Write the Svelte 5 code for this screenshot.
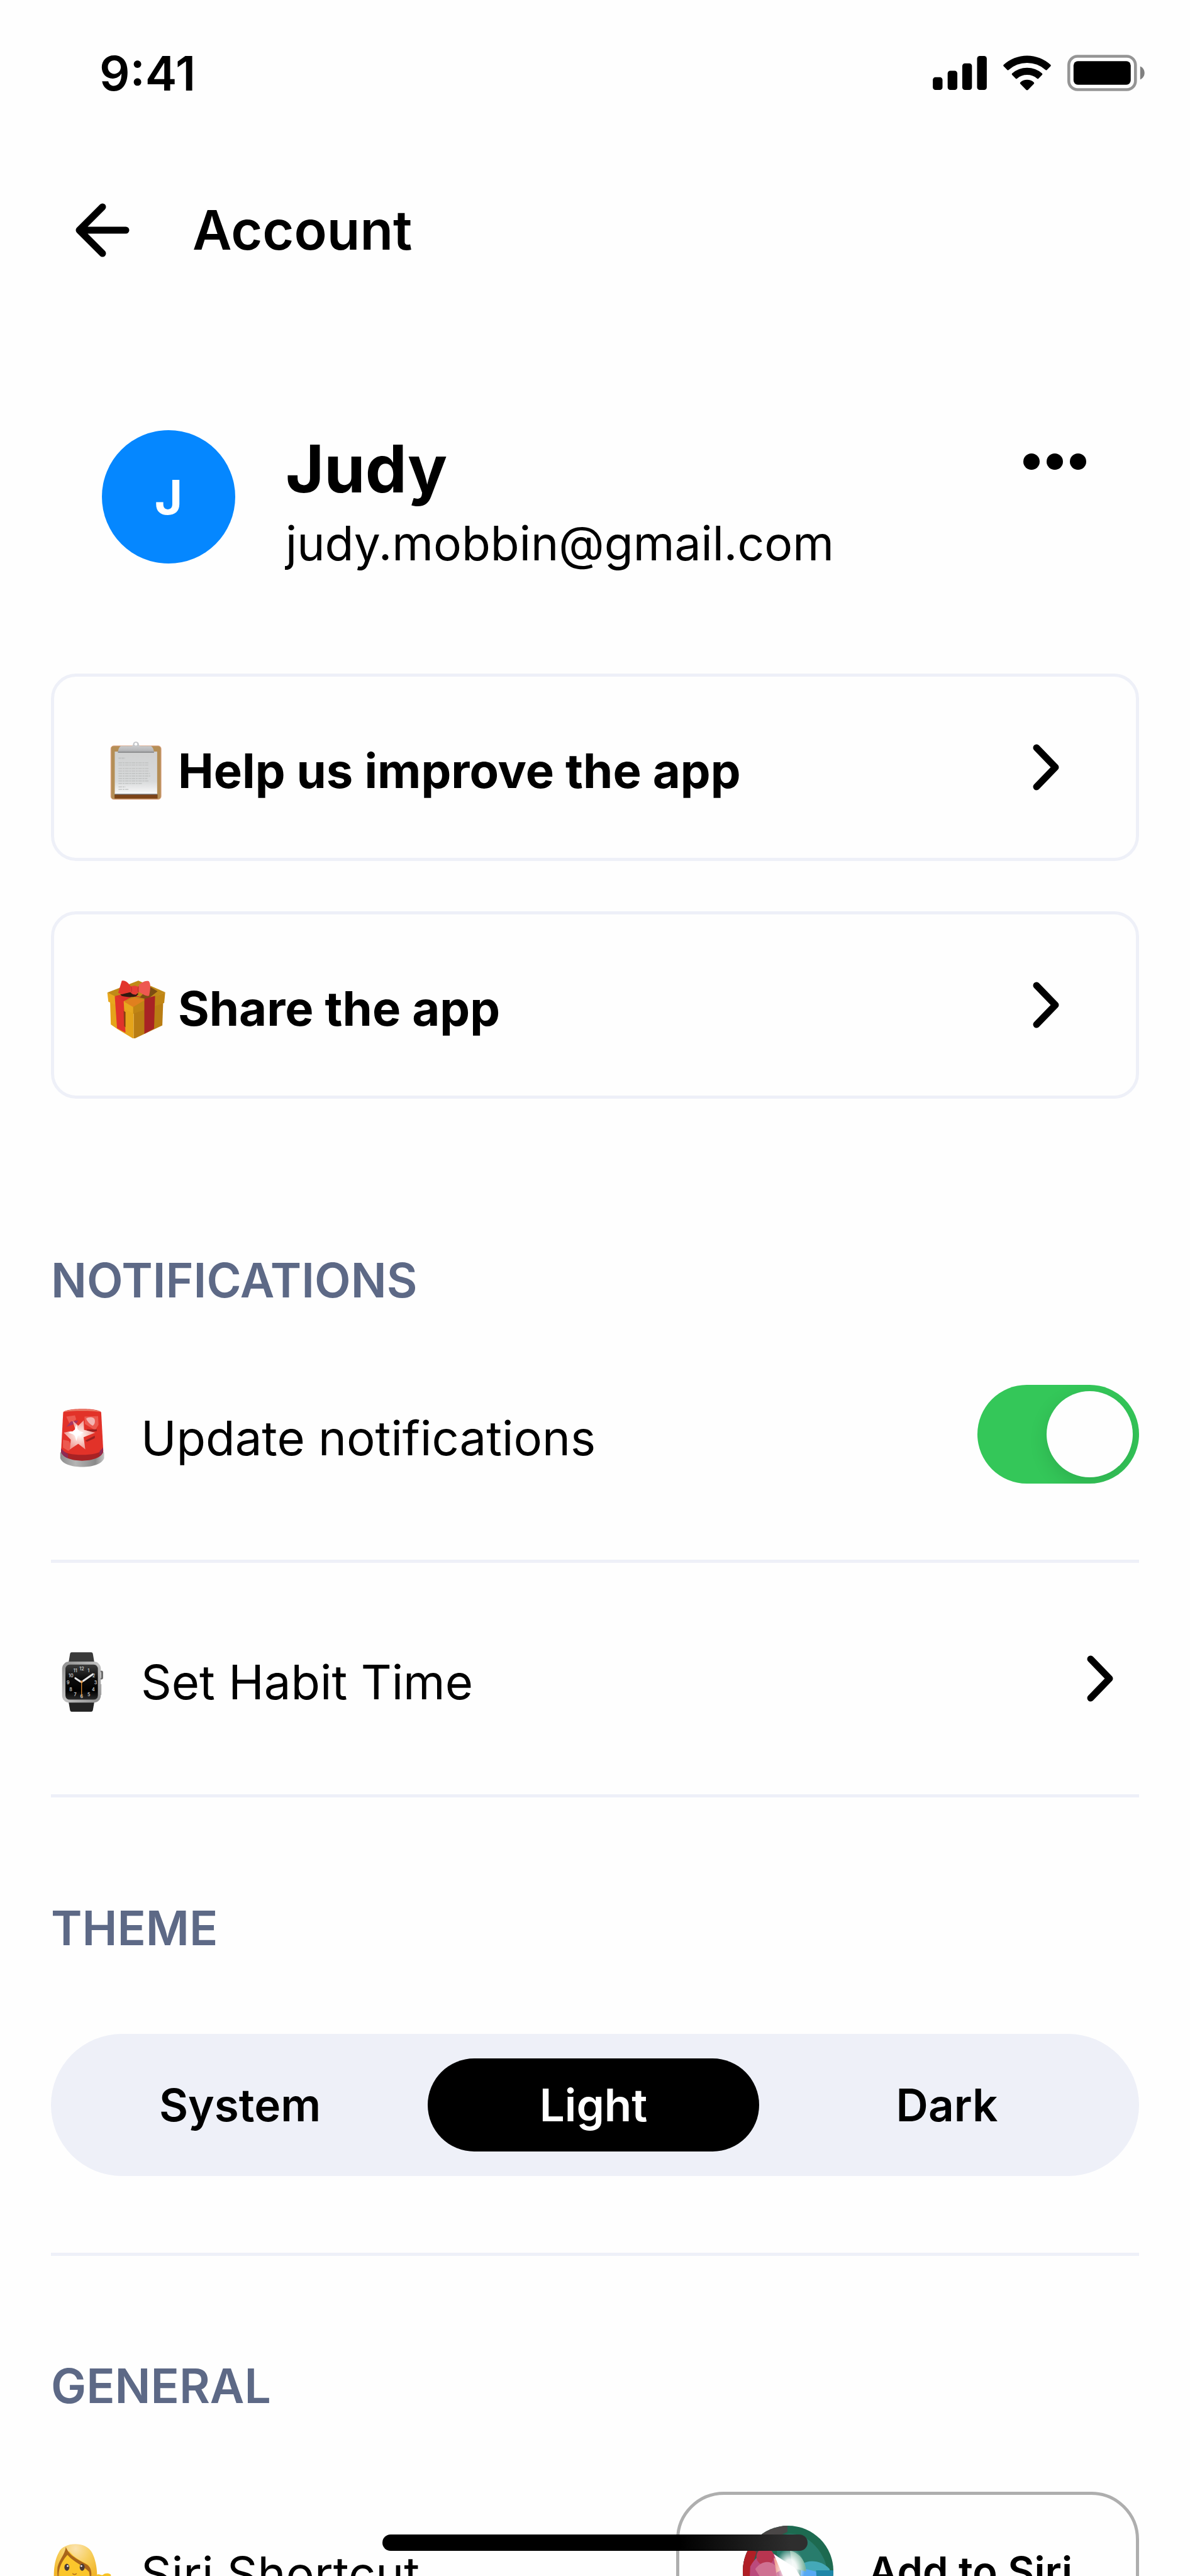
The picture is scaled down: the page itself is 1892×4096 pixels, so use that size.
<script lang="ts">
  type Theme = 'System' | 'Light' | 'Dark';

  const themes: Theme[] = ['System', 'Light', 'Dark'];

  let theme = $state<Theme>('Light');
  let updates = $state(true);
</script>

{#snippet chevron()}
  <svg class="chevron" viewBox="0 0 42 74" aria-hidden="true">
    <path d="M6 6 36 37 6 68" />
  </svg>
{/snippet}

{#snippet clipboard()}
  <svg class="emoji" viewBox="59 73 292 292" aria-hidden="true">
    <defs>
      <linearGradient id="paper" x1="0" y1="0" x2="0" y2="1">
        <stop offset="0" stop-color="#d0d1d1" />
        <stop offset="0.7" stop-color="#d8dadb" />
        <stop offset="1" stop-color="#fafafa" />
      </linearGradient>
      <linearGradient id="clip" x1="0" y1="0" x2="0" y2="1">
        <stop offset="0" stop-color="#c9cacc" />
        <stop offset="0.7" stop-color="#b4b5b7" />
        <stop offset="1" stop-color="#7f8082" />
      </linearGradient>
    </defs>
    <rect x="84" y="100" width="243" height="259" rx="14" fill="#b58e56" stroke="#e3a88c" stroke-width="3" />
    <rect x="102" y="335" width="208" height="20" fill="#7c4318" />
    <rect x="103" y="128" width="205" height="206" fill="url(#paper)" />
    <path d="M103 334h205" stroke="#6f7680" stroke-width="4" />
    <path d="M121 160h32" stroke="#bfc1c1" stroke-width="6" stroke-dasharray="12 3" />
    <path
      d="M121 182h144M121 193h144M121 210h146M121 222h148M121 234h152M121 246h154M121 258h140M121 270h148M121 282h116M121 299h34M121 311h48"
      stroke="#c3c5c5"
      stroke-width="5"
      stroke-dasharray="17 3 9 3"
    />
    <path d="M181 106c8-4 10-10 11-17 3-12 24-12 27 0 1 7 3 13 12 17z" fill="#c4c6c9" />
    <circle cx="205" cy="92" r="7" fill="#fefefe" />
    <path d="M132 101h146c9 5 14 17 15 33H118c1-16 6-28 14-33z" fill="url(#clip)" />
  </svg>
{/snippet}

{#snippet gift()}
  <svg class="emoji" viewBox="59 77 292 292" aria-hidden="true">
    <path d="M80 180 195 215V372L118 326 84 302z" fill="#e5a41a" />
    <path d="M195 215 338 170 333 307 195 372z" fill="#b97d13" />
    <path d="M67 148 217 90 347 146 192 219z" fill="#c08a17" />
    <path d="M67 148 192 206V248L72 192z" fill="#e8a81e" />
    <path d="M192 210 347 146 342 198 192 250z" fill="#c08514" />
    <path d="M222 172 275 120 310 142 262 180z" fill="#7c4d12" />
    <path d="M103 165 146 188 155 342 114 320z" fill="#e0332a" />
    <path d="M146 236 155 242V316L148 310z" fill="#8b3d12" />
    <path d="M246 178 298 164 293 322 246 348z" fill="#a82324" />
    <path d="M103 165 160 150 240 172 190 166 146 190z" fill="#dc3129" />
    <path d="M148 192 196 172 247 184 192 218z" fill="#e0801e" />
    <path d="M130 156c24-8 62-16 88-2l-12 12c-20 6-50 4-70-2z" fill="#301a10" />
    <path d="M137 91c16-5 30 9 42 24l4 30-46 11c-7-3-16-3-17-9z" fill="#e2342c" />
    <path d="M218 111c16-11 33-24 50-18 9 12 9 34 1 70-18 6-34-12-50-18z" fill="#ee5850" />
    <path d="M178 121c10-9 32-9 40 2 3 14 0 27-13 35-14 0-24-6-27-15z" fill="#e63e36" />
    <path d="M181 118c5 12 4 24 2 28M218 118c-4 12-3 20 0 30" fill="none" stroke="#b8292a" stroke-width="3" />
  </svg>
{/snippet}

{#snippet siren()}
  <svg class="emoji" viewBox="40 94 292 292" aria-hidden="true">
    <defs>
      <linearGradient id="base" x1="0" x2="1">
        <stop offset="0" stop-color="#8e8e8e" />
        <stop offset="0.35" stop-color="#b4b4b4" />
        <stop offset="0.8" stop-color="#8a8a8a" />
        <stop offset="1" stop-color="#c4c4c4" />
      </linearGradient>
      <radialGradient id="flare">
        <stop offset="0" stop-color="#fff" />
        <stop offset="0.35" stop-color="#fbdcd6" />
        <stop offset="1" stop-color="#f09a93" />
      </radialGradient>
    </defs>
    <path d="M79 312c22-20 190-20 212 0v26c-14 58-198 58-212 0z" fill="url(#base)" />
    <path d="M93 118c6-22 176-24 184 0l10 184c-14 62-192 62-204 0z" fill="#e23229" />
    <path d="M84 296c20 36 180 36 202 0l1 12c-14 58-192 58-204 0z" fill="#a82224" />
    <path d="M84 292c8 12 20 22 32 27v20c-16-6-30-16-33-31zM286 286c-3 8-10 14-16 18l-2 24c10-6 17-14 18-24z" fill="#8e2a55" />
    <path d="M96 116c14-17 164-17 178 0-40-8-138-8-178 0z" fill="#e98672" />
    <path d="M108 138l42-6 6 20-32 20zM92 250l28 6 20 30-22 18-26-16zM196 138l66-2 2 42-16 26-50-30z" fill="#ec5a50" />
    <path d="M204 148c12-10 38-10 42 6 2 14-2 22-10 28-16-8-26-20-32-34z" fill="#f4b5b3" />
    <path d="M206 200h50v8l-46 8zM200 254l46-24v12l-38 18z" fill="#9b2020" />
    <path d="M108 188l22-26 36-6-8 14z" fill="#a83560" />
    <path
      d="M157 216 138 156l28 26 26-26 2 46 54 14-56 22 8 58-34-26-40 26 4-46-34-34 34-8z"
      fill="url(#flare)"
    />
    <path d="m157 178 8 28 28 10-28 10-8 30-9-30-30-10 30-10z" fill="#fff" />
    <circle cx="157" cy="216" r="17" fill="#fff" />
  </svg>
{/snippet}

{#snippet watch()}
  <svg class="emoji" viewBox="40 74 292 292" aria-hidden="true">
    <defs>
      <linearGradient id="case" x1="0" y1="0" x2="1" y2="1">
        <stop offset="0" stop-color="#8e8e8e" />
        <stop offset="0.5" stop-color="#c2c2c2" />
        <stop offset="1" stop-color="#8a8a8a" />
      </linearGradient>
      <linearGradient id="face" x1="0" y1="0" x2="0" y2="1">
        <stop offset="0" stop-color="#3c3c3c" />
        <stop offset="0.4" stop-color="#0c0c0c" />
        <stop offset="0.75" stop-color="#000" />
        <stop offset="1" stop-color="#2c2c2c" />
      </linearGradient>
    </defs>
    <path d="M134 78h94c6 0 8 4 9 9l7 42H119l7-42c1-5 3-9 8-9z" fill="#3a3a3a" />
    <path d="M119 316h125l-7 40c-1 5-3 9-9 9h-94c-5 0-7-4-8-9z" fill="#222" />
    <rect x="268" y="167" width="18" height="42" rx="7" fill="#666" />
    <path d="M274 174v28" stroke="#eee" stroke-width="6" />
    <path d="M275 232v52" stroke="#aaa" stroke-width="6" />
    <rect x="88" y="123" width="187" height="198" rx="34" fill="url(#case)" />
    <rect x="104" y="137" width="157" height="170" rx="20" fill="url(#face)" />
    <g class="digits">
      <text x="183" y="165">12</text>
      <text x="216" y="173">1</text>
      <text x="241" y="198">2</text>
      <text x="250" y="232">3</text>
      <text x="239" y="266">4</text>
      <text x="217" y="289">5</text>
      <text x="182" y="298">6</text>
      <text x="151" y="289">7</text>
      <text x="130" y="266">8</text>
      <text x="117" y="232">9</text>
      <text x="131" y="200">10</text>
      <text x="152" y="173">11</text>
    </g>
    <path d="M152 203 176 219M190 216 236 184" stroke="#e8e8e8" stroke-width="9" stroke-linecap="round" />
    <path d="M182 216v78" stroke="#e08a2c" stroke-width="4" />
    <circle cx="182" cy="221" r="6" fill="#eaa55c" />
  </svg>
{/snippet}

{#snippet woman()}
  <svg class="emoji" viewBox="40 76 292 292" aria-hidden="true">
    <defs>
      <radialGradient id="hair" cx="0.5" cy="0.1" r="0.7">
        <stop offset="0" stop-color="#fbe3b0" />
        <stop offset="0.5" stop-color="#f7cf5e" />
        <stop offset="1" stop-color="#f2b62a" />
      </radialGradient>
    </defs>
    <path d="M48 300c0-70-4-130 24-180 22-52 132-56 160 0 28 54 26 110 26 180z" fill="url(#hair)" />
    <path d="M248 290c-4-30 0-56 12-64 12-2 20 8 26 2 8-8 26-10 36-2 8 18 0 60-20 80z" fill="#f7c325" />
    <path d="M78 180c6-28 24-50 44-66 24 32 62 50 94 66 10 60 0 120-66 126-62-6-80-60-72-126z" fill="#fbc62c" />
    <path
      d="M106 94c-4 34-32 62-40 96-4 32 2 70 12 92-18-56-2-110 36-150 30 36 70 46 104 82 8 32 2 58-8 76 26-50 26-90 0-110-40-24-84-38-104-86z"
      fill="#a9651a"
    />
    <ellipse cx="111" cy="192" rx="12" ry="17" fill="#4a3a36" />
    <ellipse cx="185" cy="192" rx="12" ry="17" fill="#4a3a36" />
    <circle cx="115" cy="186" r="4" fill="#fff" />
    <circle cx="181" cy="186" r="4" fill="#fff" />
    <path d="M138 222c6 6 14 6 20 0" fill="none" stroke="#b3701c" stroke-width="5" />
  </svg>
{/snippet}

{#snippet siriOrb()}
  <svg class="orb" viewBox="0 0 147 147" aria-hidden="true">
    <defs>
      <clipPath id="ball"><circle cx="73" cy="73" r="73" /></clipPath>
      <radialGradient id="glow">
        <stop offset="0" stop-color="#fff" />
        <stop offset="0.45" stop-color="#fff" stop-opacity="0.9" />
        <stop offset="1" stop-color="#fff" stop-opacity="0" />
      </radialGradient>
    </defs>
    <g clip-path="url(#ball)">
      <rect width="147" height="147" fill="#1d6a50" />
      <path d="M0 147V20L30 0h42v10C50 20 34 34 14 58z" fill="#4a4747" />
      <path d="M54 20C80 2 120 20 134 62l4 85H60z" fill="#287c6c" />
      <path d="M0 147V34l22 8-8 30v75z" fill="#b01f26" />
      <path d="M12 66c10-20 30-32 46-14l26 20-6 75H8z" fill="#bb4a7c" />
      <circle cx="36" cy="50" r="14" fill="#b83550" />
      <path d="M20 70c10-14 24-14 32-6l6 20-22 12z" fill="#cf7192" />
      <path d="M50 52c10 2 14 10 14 18l-10 6z" fill="#f0a597" />
      <path d="M96 62c10-8 32-6 44 8v50H96z" fill="#44a9b8" />
      <path d="M118 72h29v40h-26z" fill="#1f86a8" />
      <path d="M94 68l24 6 4 40H90z" fill="#56a9f4" />
      <path d="M76 40c16 4 26 18 26 34l-22-6z" fill="#7db5a0" />
      <ellipse cx="76" cy="70" rx="24" ry="34" fill="url(#glow)" />
      <path d="m50 46 34 22 14 22-32-6z" fill="#fff" />
    </g>
  </svg>
{/snippet}

<div class="screen">
  <div class="status-bar">
    <span class="time">9:41</span>
    <div class="indicators">
      <svg class="signal" viewBox="0 0 262 165" aria-hidden="true">
        <rect x="0" y="103" width="47" height="62" rx="13" />
        <rect x="72" y="72" width="47" height="93" rx="13" />
        <rect x="143" y="36" width="47" height="129" rx="13" />
        <rect x="215" y="0" width="47" height="165" rx="13" />
      </svg>
      <svg class="wifi" viewBox="0 0 236 171" aria-hidden="true">
        <path d="M4 46Q1 50 4 53L22 71Q25 74 28 71A134 134 0 0 1 208 71Q211 74 214 71L232 53Q235 50 232 46A168 168 0 0 0 4 46z" />
        <path d="M45 88Q42 92 45 95L63 113Q66 116 69 113A75 75 0 0 1 167 113Q170 116 173 113L191 95Q194 92 191 88A110 110 0 0 0 45 88z" />
        <path d="M85 131Q82 135 85 138L114 168Q118 171 122 168L151 138Q154 135 151 131A50 50 0 0 0 85 131z" />
      </svg>
      <svg class="battery" viewBox="0 0 376 176" aria-hidden="true">
        <rect x="7" y="7" width="324" height="162" rx="42" fill="none" stroke="#959595" stroke-width="14" />
        <rect x="30" y="31" width="278" height="114" rx="21" />
        <path d="M354 56C382 68 382 108 354 120z" fill="#808080" />
      </svg>
    </div>
  </div>

  <header>
    <button type="button" class="back" aria-label="Back">
      <svg viewBox="0 0 86 86" aria-hidden="true">
        <path d="M43 6 6 43 43 80M6 43H80" />
      </svg>
    </button>
    <h1>Account</h1>
  </header>

  <main>
    <section class="profile">
      <div class="avatar">J</div>
      <div class="identity">
        <h2>Judy</h2>
        <p>judy.mobbin@gmail.com</p>
      </div>
      <button type="button" class="more" aria-label="More options">
        <svg viewBox="0 0 100 28" aria-hidden="true">
          <circle cx="13" cy="14" r="13" />
          <circle cx="50" cy="14" r="13" />
          <circle cx="87" cy="14" r="13" />
        </svg>
      </button>
    </section>

    <div class="cards">
      <button type="button" class="card">
        <span class="label">{@render clipboard()}Help us improve the app</span>
        {@render chevron()}
      </button>
      <button type="button" class="card">
        <span class="label">{@render gift()}Share the app</span>
        {@render chevron()}
      </button>
    </div>

    <section class="notifications">
      <h3>NOTIFICATIONS</h3>
      <div class="row">
        <label class="label" for="updates">{@render siren()}Update notifications</label>
        <input id="updates" class="toggle" type="checkbox" role="switch" bind:checked={updates} />
      </div>
      <button type="button" class="row habit">
        <span class="label">{@render watch()}Set Habit Time</span>
        {@render chevron()}
      </button>
    </section>

    <section class="theme">
      <h3>THEME</h3>
      <div class="segments" role="radiogroup" aria-label="Theme">
        {#each themes as option}
          <label class:active={theme === option}>
            <input type="radio" name="theme" value={option} bind:group={theme} />
            {option}
          </label>
        {/each}
      </div>
    </section>

    <section class="general">
      <h3>GENERAL</h3>
      <div class="siri">
        <span class="label">{@render woman()}Siri Shortcut</span>
        <button type="button" class="add">{@render siriOrb()}Add to Siri</button>
      </div>
    </section>
  </main>

  <div class="home-indicator"></div>
</div>

<style>
  :global(body) {
    background: #fefefe;
  }

  .screen {
    position: relative;
    height: 100vh;
    overflow: hidden;
    background: #fefefe;
    color: #000;
    font-family: Inter, 'Liberation Sans', sans-serif;
    font-size: 76px;
    line-height: 90px;
  }

  h1,
  h2,
  h3,
  p {
    margin: 0;
  }

  button {
    appearance: none;
    margin: 0;
    padding: 0;
    border: none;
    background: transparent;
    color: inherit;
    font: inherit;
    text-align: left;
    cursor: pointer;
  }

  svg {
    display: block;
    flex: none;
  }

  .status-bar {
    display: flex;
    align-items: center;
    justify-content: space-between;
    height: 232px;
    padding: 0 72px 0 158px;
  }

  .time {
    font-weight: 600;
  }

  .indicators {
    display: flex;
    align-items: center;
    gap: 25px;
  }

  .signal {
    width: 86px;
    height: 54px;
  }

  .wifi {
    width: 78px;
    height: 56px;
  }

  .battery {
    width: 123px;
    height: 58px;
  }

  header {
    display: flex;
    align-items: center;
    gap: 100px;
    height: 268px;
    padding-left: 120px;
  }

  .back svg {
    width: 86px;
    height: 86px;
  }

  .back path,
  .chevron path {
    fill: none;
    stroke: #000;
    stroke-width: 11;
    stroke-linecap: round;
    stroke-linejoin: round;
  }

  h1 {
    font-size: 86px;
    font-weight: 600;
  }

  main {
    padding: 180px 81px 0;
  }

  .profile {
    display: flex;
    align-items: flex-start;
    gap: 80px;
    padding: 0 84px 0 81px;
  }

  .avatar {
    flex: none;
    display: flex;
    align-items: center;
    justify-content: center;
    width: 212px;
    height: 212px;
    margin-top: 4px;
    border-radius: 50%;
    background: #0587ff;
    color: #fff;
    font-weight: 700;
  }

  .identity {
    flex: 1;
  }

  h2 {
    font-size: 105px;
    line-height: 130px;
    font-weight: 700;
  }

  .identity p {
    font-size: 75px;
    line-height: 108px;
  }

  .more {
    display: flex;
    align-items: center;
    height: 108px;
  }

  .more svg {
    width: 100px;
    height: 28px;
  }

  .cards {
    display: flex;
    flex-direction: column;
    gap: 80px;
    margin-top: 153px;
  }

  .card {
    display: flex;
    align-items: center;
    justify-content: space-between;
    height: 298px;
    padding: 0 122px 0 80px;
    border: 5px solid #eef0f8;
    border-radius: 40px;
    font-weight: 700;
  }

  .label {
    display: flex;
    align-items: center;
    gap: 45px;
    padding: 10px 0 0 2px;
  }

  .card .label {
    gap: 19px;
  }

  .emoji {
    width: 96px;
    height: 96px;
  }

  .chevron {
    width: 42px;
    height: 74px;
  }

  .digits {
    fill: #ddd;
    font-size: 22px;
    font-weight: 500;
    text-anchor: middle;
  }

  h3 {
    color: #5d6986;
    font-size: 75px;
    font-weight: 600;
  }

  .notifications {
    margin-top: 244px;
  }

  .row {
    display: flex;
    align-items: center;
    justify-content: space-between;
    width: 100%;
    height: 404px;
    box-sizing: border-box;
    border-bottom: 5px solid #eef0f8;
  }

  .habit {
    height: 373px;
    padding-right: 41px;
  }

  .toggle {
    appearance: none;
    flex: none;
    width: 257px;
    height: 157px;
    margin: 0;
    padding: 10px;
    border-radius: 80px;
    background: #d5d8e0;
    overflow: hidden;
    cursor: pointer;
  }

  .toggle::before {
    content: '';
    display: block;
    width: 137px;
    height: 137px;
    border-radius: 50%;
    background: #fefefe;
    box-shadow: 0 10px 30px rgba(0, 0, 0, 0.12);
  }

  .toggle:checked {
    background: #34c759;
  }

  .toggle:checked::before {
    margin-left: auto;
  }

  .theme {
    margin-top: 163px;
    padding-bottom: 122px;
    border-bottom: 5px solid #eef0f8;
  }

  .segments {
    display: flex;
    gap: 35px;
    margin-top: 123px;
    padding: 39px 42px 39px 37px;
    border-radius: 113px;
    background: #eef0f8;
  }

  .segments label {
    flex: 1;
    border-radius: 74px;
    font-size: 71px;
    line-height: 148px;
    font-weight: 600;
    text-align: center;
    cursor: pointer;
  }

  .segments .active {
    background: #000;
    color: #fff;
  }

  .segments input {
    position: absolute;
    opacity: 0;
    pointer-events: none;
  }

  .general {
    margin-top: 162px;
  }

  .siri {
    display: flex;
    align-items: center;
    justify-content: space-between;
    margin-top: 123px;
  }

  .siri .label {
    padding-top: 6px;
  }

  .add {
    display: flex;
    align-items: center;
    gap: 54px;
    height: 253px;
    padding: 0 101px;
    border: 5px solid #aeaeae;
    border-radius: 76px;
    font-size: 65px;
    font-weight: 600;
  }

  .orb {
    width: 145px;
    height: 145px;
  }

  .home-indicator {
    position: absolute;
    bottom: 40px;
    left: 50%;
    width: 676px;
    height: 26px;
    border-radius: 13px;
    background: linear-gradient(90deg, #000 70%, #2e2e2e 96%);
    transform: translateX(-50%);
  }
</style>
